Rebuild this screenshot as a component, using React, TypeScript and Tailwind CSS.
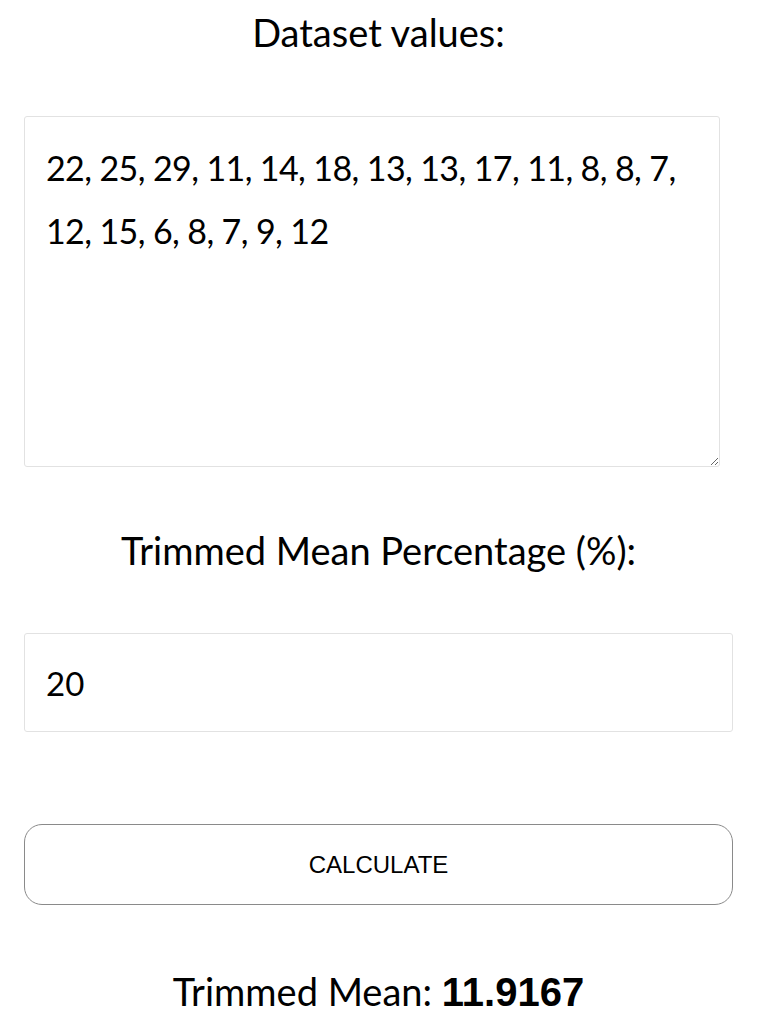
export default function App() {
  return (
    <div
      className="min-h-screen bg-white pl-6 pr-[26px] pt-[10px] text-black"
      style={{ fontFamily: "Lato, 'Noto Sans', sans-serif" }}
    >
      <h2 className="text-center text-[38px] leading-[44px]">Dataset values:</h2>
      <textarea
        className="mt-[62px] block h-[351px] w-[696px] rounded-[3px] border border-[#e2e2e2] px-[21px] pt-[19px] text-[34px] leading-[63px] tracking-[-0.6px] outline-none"
        defaultValue="22, 25, 29, 11, 14, 18, 13, 13, 17, 11, 8, 8, 7, 12, 15, 6, 8, 7, 9, 12"
      />
      <h2 className="mt-[61px] text-center text-[38px] leading-[44px]">
        Trimmed Mean Percentage (%):
      </h2>
      <input
        type="text"
        defaultValue="20"
        className="mt-[61px] block h-[99px] w-full rounded-[3px] border border-[#e2e2e2] px-[21px] text-[33px] outline-none"
      />
      <button
        type="button"
        className="mt-[92px] block h-[81px] w-full rounded-[18px] border border-[#8a8a8a] bg-white text-[24px] text-black"
        style={{ fontFamily: "'Liberation Sans', Arial, sans-serif" }}
      >
        CALCULATE
      </button>
      <p className="mt-[62px] text-center text-[38px] leading-[48px]">
        Trimmed Mean:{" "}
        <span
          className="font-bold text-[40px]"
          style={{ fontFamily: "'Liberation Sans', Arial, sans-serif" }}
        >
          11.9167
        </span>
      </p>
    </div>
  );
}
